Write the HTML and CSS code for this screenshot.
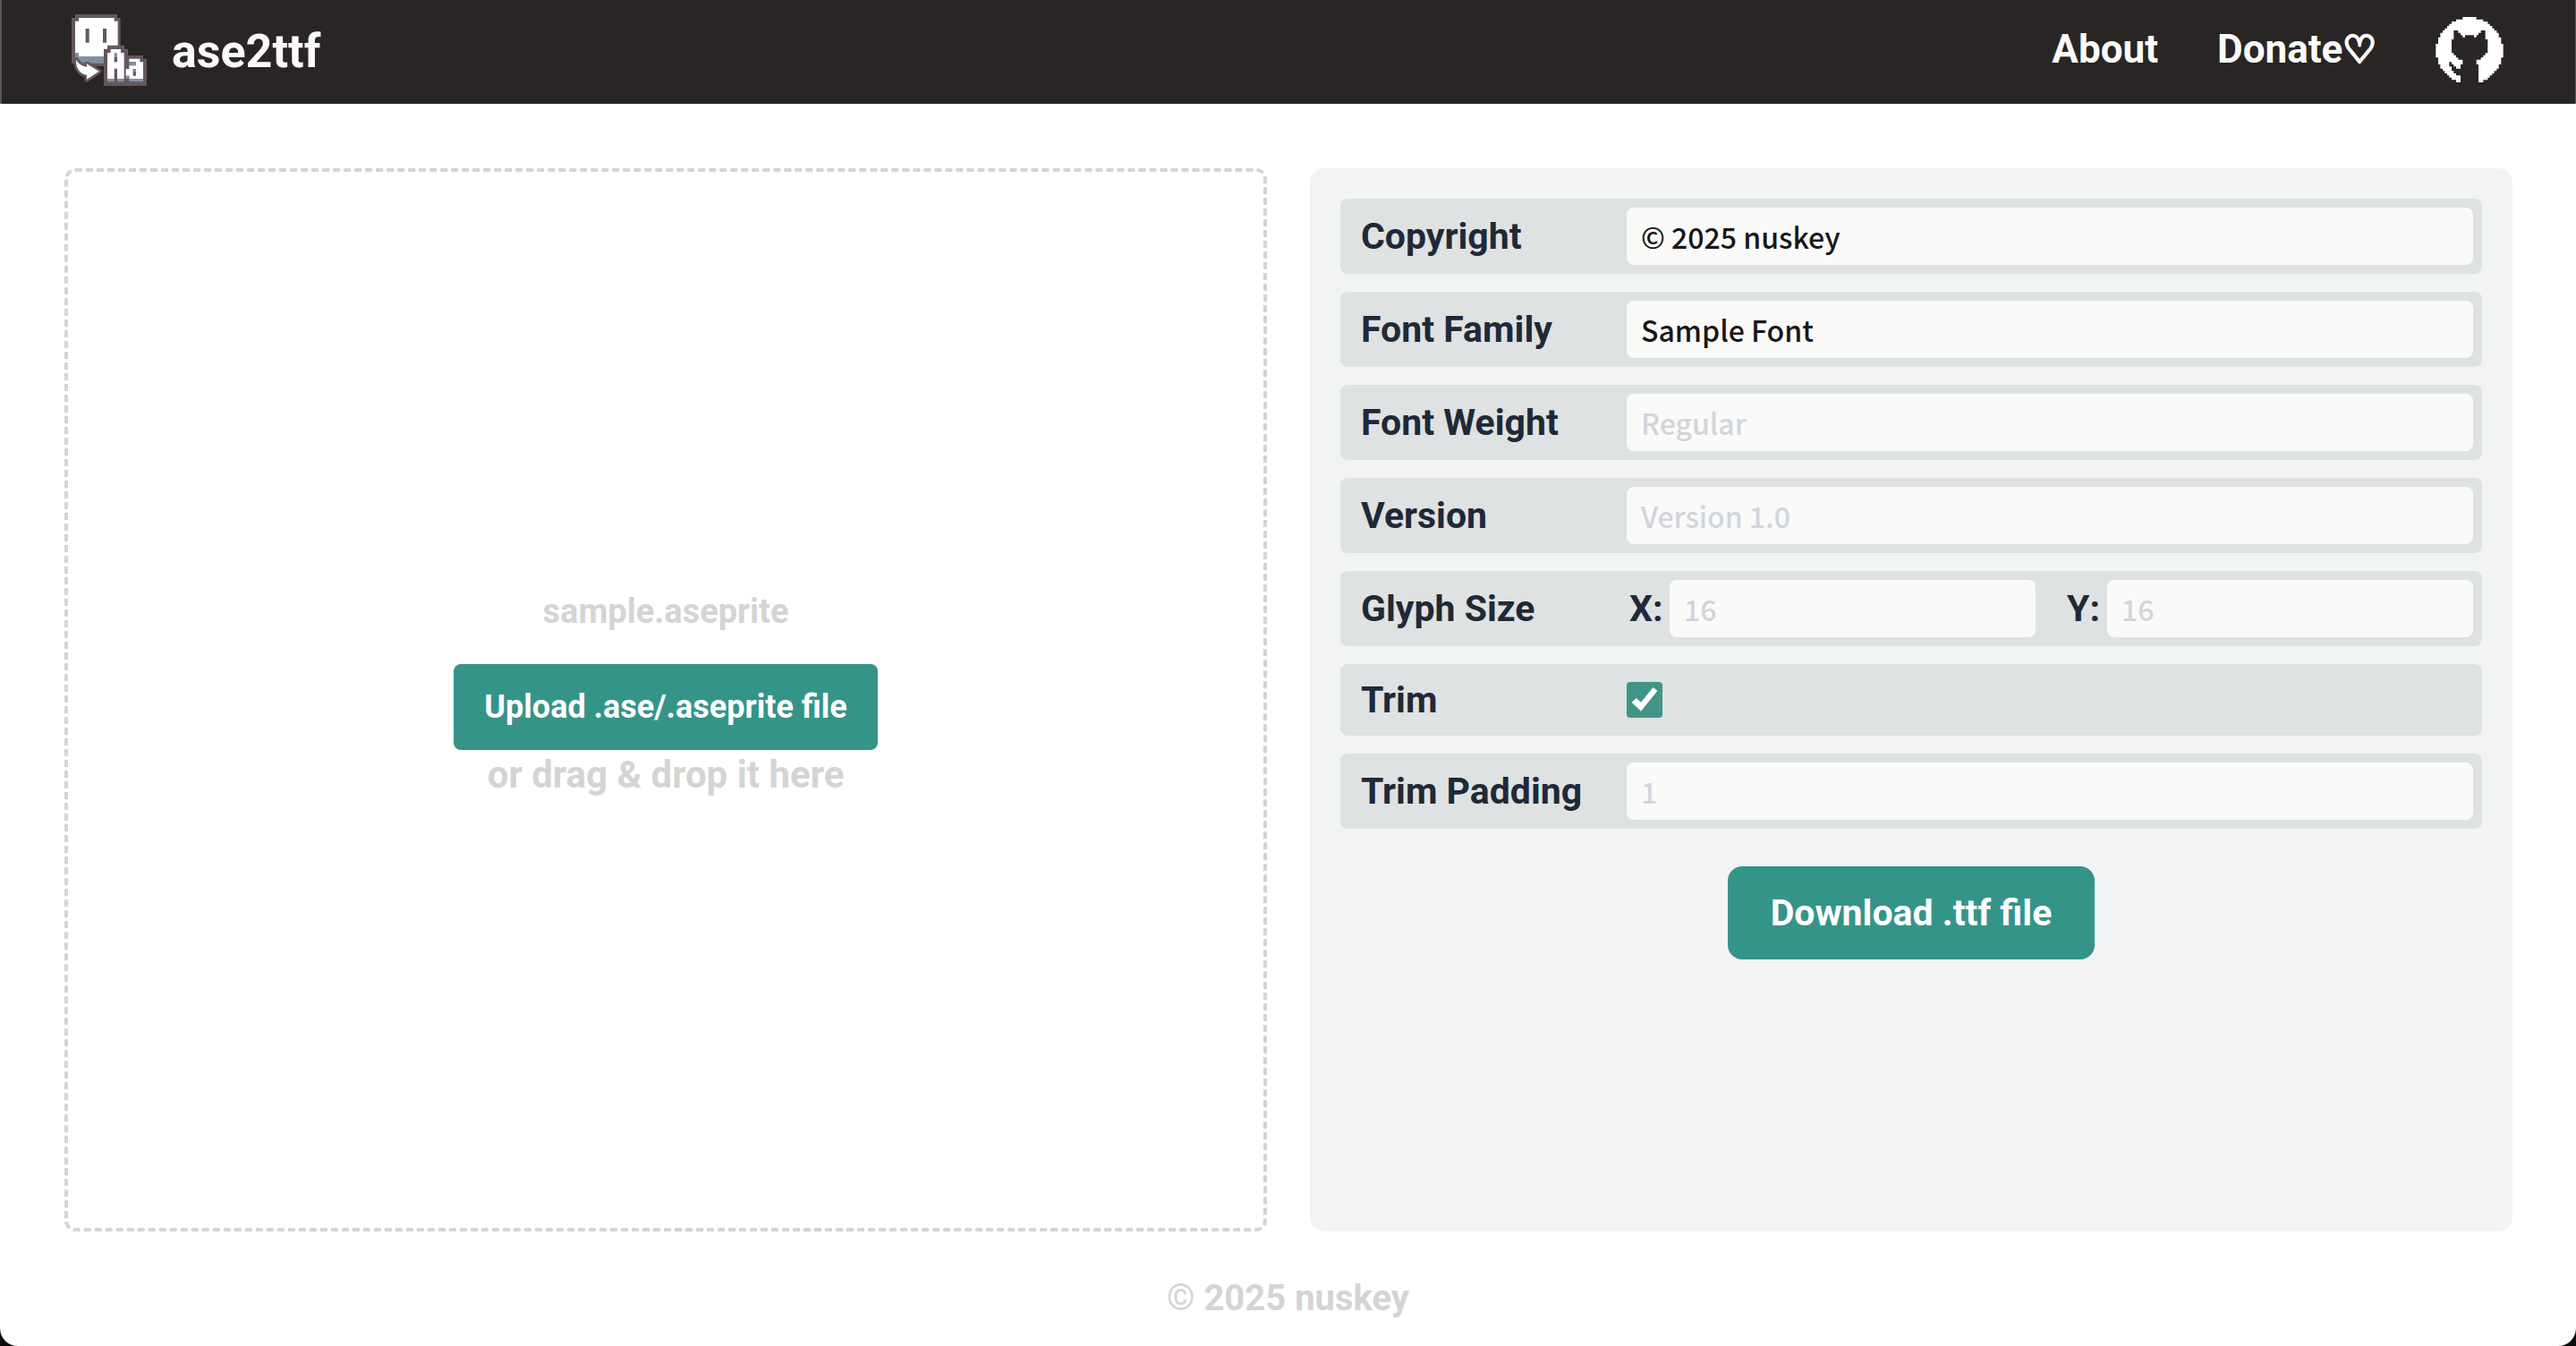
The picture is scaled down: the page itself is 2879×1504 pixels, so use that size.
FILE: index.html
```html
<!DOCTYPE html>
<html lang="en">
<head>
<meta charset="utf-8">
<title>ase2ttf</title>
<link rel="stylesheet" href="styles.css">
</head>
<body>
<header class="topbar">
  <a class="brand" href="#">
    <svg class="brand-logo" viewBox="60 48 252 240" aria-hidden="true">
      <path fill="#655661" d="M72 48H213V60H224V212H208V222H72V212H60V60H72Z"/>
      <path fill="#fff" d="M84 60H203V71H215V189H72V71H84Z"/>
      <path fill="#7f919e" d="M72 177H84V189H215V212H84V200H72Z"/>
      <path fill="#655661" d="M107 96H119V143H107ZM165 96H177V143H165Z"/>
      <path fill="#fff" stroke="#655661" stroke-width="16" stroke-linejoin="round" paint-order="stroke" d="M76 200C82 213 95 221 111 224V214L152 239L111 266V251C91 249 72 230 76 200Z"/>
      <path fill="#655661" d="M168 164H180V152H237V164H249V186H300V197H312V288H168Z"/>
      <path fill="#fff" d="M191 165H225V177H236V264H213V230H203V264H180V177H191Z"/>
      <path fill="#7f919e" d="M203 177H213V190H203ZM180 264H203V274H180ZM213 264H236V274H213Z"/>
      <path fill="#655661" d="M203 190H213V208H203Z"/>
      <path fill="#fff" fill-rule="evenodd" d="M253 197H289V208H300V264H253V254H242V231H253V220H276V208H253ZM266 231V254H276V231Z"/>
      <path fill="#7f919e" d="M253 208H276V219H253ZM266 231H276V241H266ZM242 254H253V264H242ZM253 264H300V274H253Z"/>
    </svg>
    <span>ase2ttf</span>
  </a>
  <nav class="links">
    <a href="#">About</a>
    <a href="#">Donate<span class="heart">♡</span></a>
    <a class="github" href="#" aria-label="GitHub">
      <svg viewBox="19 19 226 219" aria-hidden="true">
        <path fill="#fff" d="M109 19H155V27H178V34H193V42H200V49H208V57H215V64H223V72H230V87H238V109H245V155H238V178H230V192H223V200H215V208H208V215H200V222H193V230H178V238H162V178H155V162H170V155H178V147H185V140H193V94H185V64H170V72H162V80H155V87H147V80H117V87H109V80H102V72H94V64H79V94H72V140H79V147H87V155H94V162H109V178H102V192H87V185H79V177H72V170H64V185H72V200H79V208H87V215H102V238H87V230H72V222H64V215H57V208H49V200H42V192H34V178H27V155H19V109H27V87H34V72H42V64H49V57H57V49H64V42H72V34H87V27H109Z"/>
      </svg>
    </a>
  </nav>
</header>

<main class="workspace">
  <section class="dropzone">
    <p class="file-name">sample.aseprite</p>
    <button class="button upload" type="button">Upload .ase/.aseprite file</button>
    <p class="hint">or drag &amp; drop it here</p>
  </section>

  <form class="settings">
    <div class="row">
      <label for="copyright">Copyright</label>
      <input class="field" id="copyright" type="text" value="© 2025 nuskey">
    </div>
    <div class="row">
      <label for="family">Font Family</label>
      <input class="field" id="family" type="text" value="Sample Font">
    </div>
    <div class="row">
      <label for="weight">Font Weight</label>
      <input class="field" id="weight" type="text" placeholder="Regular">
    </div>
    <div class="row">
      <label for="version">Version</label>
      <input class="field" id="version" type="text" placeholder="Version 1.0">
    </div>
    <div class="row" role="group" aria-labelledby="glyph-size">
      <span id="glyph-size">Glyph Size</span>
      <div class="pair">
        <div class="axis">
          <label for="size-x">X:</label>
          <input class="field" id="size-x" type="text" placeholder="16">
        </div>
        <div class="axis">
          <label for="size-y">Y:</label>
          <input class="field" id="size-y" type="text" placeholder="16">
        </div>
      </div>
    </div>
    <div class="row check-row">
      <label for="trim">Trim</label>
      <input class="check" id="trim" type="checkbox" checked>
    </div>
    <div class="row">
      <label for="padding">Trim Padding</label>
      <input class="field" id="padding" type="text" placeholder="1">
    </div>
    <button class="button download" type="button">Download .ttf file</button>
  </form>
</main>

<footer class="footer">© 2025 nuskey</footer>
</body>
</html>
```
FILE: styles.css
```css
* {
  box-sizing: border-box;
}

html {
  background: #0c0c0a;
}

body {
  display: flex;
  flex-direction: column;
  min-height: 100vh;
  margin: 0;
  overflow: hidden;
  background: #fff;
  border-radius: 0 0 20px 20px;
  color: #1f2937;
  font-family: Roboto, "Liberation Sans", sans-serif;
  font-size: 41px;
  font-weight: 700;
  line-height: 56px;
}

p {
  margin: 0;
}

a {
  color: inherit;
  text-decoration: none;
}

/* Header */
.topbar {
  display: flex;
  align-items: center;
  justify-content: space-between;
  height: 116px;
  padding: 0 80px 0 78px;
  border-left: 2px solid #5a5757;
  border-right: 1px solid #5a5757;
  background: #292524;
  color: #fafaf9;
}

.brand {
  display: flex;
  align-items: center;
  gap: 28px;
  font-size: 52px;
}

.brand-logo {
  width: 84px;
  height: 80px;
  margin-bottom: 4px;
}

.links {
  display: flex;
  align-items: center;
  gap: 66px;
  padding-bottom: 6px;
  font-size: 44px;
}

.heart {
  font-family: "DejaVu Sans", sans-serif;
  font-size: 42px;
  -webkit-text-stroke: 3px currentColor;
}

.github svg {
  display: block;
  width: 76px;
  height: 73px;
}

/* Two panels */
.workspace {
  display: grid;
  flex: 1;
  grid-template-columns: 1fr 1fr;
  gap: 48px;
  padding: 72px 71px 0 72px;
}

.dropzone {
  display: flex;
  flex-direction: column;
  align-items: center;
  justify-content: center;
  padding-bottom: 16px;
  border: 4px dashed #d4d4d4;
  border-radius: 12px;
  color: #d4d4d4;
}

.file-name {
  font-size: 38px;
}

.hint {
  font-size: 42px;
}

.button {
  border: 0;
  background: #359488;
  color: #fff;
  font: inherit;
}

.upload {
  margin-top: 31px;
  padding: 20px 34px;
  border-radius: 8px;
  font-size: 36px;
}

.settings {
  display: flex;
  flex-direction: column;
  gap: 20px;
  padding: 34px;
  border-radius: 16px;
  background: #f2f3f5;
}

.row {
  display: grid;
  grid-template-columns: 297px 1fr;
  align-items: center;
  padding: 10px 10px 10px 23px;
  border-radius: 8px;
  background: #dee2e2;
}

.field {
  width: 100%;
  min-width: 0;
  height: 64px;
  padding: 0 16px;
  border: 0;
  border-radius: 8px;
  background: #fafaf9;
  color: #171717;
  font: 500 32px "Noto Sans CJK JP", sans-serif;
}

.field::placeholder {
  color: #d1d5db;
}

.pair {
  display: grid;
  grid-template-columns: 1fr 1fr;
  gap: 32px;
}

.axis {
  display: grid;
  grid-template-columns: 45px 1fr;
  align-items: center;
  padding-left: 3px;
}

.check-row {
  padding-block: 12px;
}

.check {
  appearance: none;
  width: 40px;
  height: 40px;
  margin: 0;
  border-radius: 4px;
  background: #429488;
}

.check:checked::before {
  content: "";
  display: block;
  height: 100%;
  background: #fff;
  clip-path: polygon(14% 57%, 27% 45%, 40% 57%, 74% 15%, 86% 25%, 40% 82%);
}

.download {
  align-self: center;
  margin-top: 22px;
  padding: 24px 48px;
  border-radius: 16px;
}

.footer {
  padding: 47px 0 25px;
  color: #d4d4d4;
  font-size: 40px;
  text-align: center;
}
```
